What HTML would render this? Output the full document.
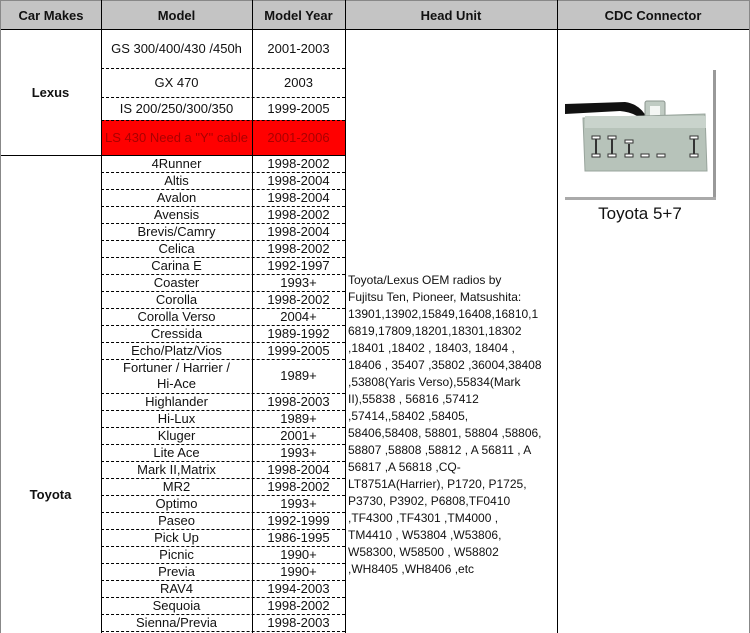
<!DOCTYPE html>
<html style="width:750px;height:633px;overflow:hidden"><head><meta charset="utf-8"><style>
*{margin:0;padding:0;box-sizing:border-box}
body{width:750px;height:633px;overflow:hidden;background:#fff;font-family:"Liberation Sans",Arial,sans-serif;position:relative;color:#111}
.c{position:absolute;display:flex;align-items:center;justify-content:center;text-align:center;font-size:13px;line-height:16px}
.h{position:absolute;top:0;height:30px;background:#c4c4c4;font-weight:bold;font-size:13px;display:flex;align-items:center;justify-content:center;border-top:1px solid #888;border-bottom:1px solid #000}
.vl{position:absolute;top:0;width:1px;background:#000}
.dl{position:absolute;height:0;border-top:1px dashed #000}
.hu{position:absolute;left:348px;top:272px;width:210px;font-size:12px;line-height:17px}
</style></head><body>
<div class="h" style="left:0;width:101px;border-left:1px solid #888">Car Makes</div>
<div class="h" style="left:101px;width:151px">Model</div>
<div class="h" style="left:252px;width:93px">Model Year</div>
<div class="h" style="left:345px;width:212px">Head Unit</div>
<div class="h" style="left:557px;width:193px;border-right:1px solid #888">CDC Connector</div>

<div style="position:absolute;left:101px;top:120px;width:244px;height:35px;background:#f00"></div>
<div class="dl" style="left:101px;top:155px;width:244px;border-top:1px solid #000"></div>
<div class="dl" style="left:0;top:155px;width:101px;border-top:1px solid #000"></div>

<div class="c" style="left:0;top:30px;width:101px;height:125px;font-weight:bold;font-size:13px">Lexus</div>
<div class="c" style="left:0;top:487px;width:101px;height:16px;font-weight:bold;font-size:13px">Toyota</div>

<div id="rows"></div>

<div class="vl" style="left:0;height:633px;background:#888"></div>
<div class="vl" style="left:749px;height:633px;background:#888"></div>
<div class="vl" style="left:101px;height:633px"></div>
<div class="vl" style="left:252px;height:633px"></div>
<div class="vl" style="left:345px;height:633px"></div>
<div class="vl" style="left:557px;height:633px"></div>

<div class="hu">Toyota/Lexus OEM radios by<br>Fujitsu Ten, Pioneer, Matsushita:<br>13901,13902,15849,16408,16810,1<br>6819,17809,18201,18301,18302<br>,18401 ,18402 , 18403, 18404 ,<br>18406 , 35407 ,35802 ,36004,38408<br>,53808(Yaris Verso),55834(Mark<br>II),55838 , 56816 ,57412<br>,57414,,58402 ,58405,<br>58406,58408, 58801, 58804 ,58806,<br>58807 ,58808 ,58812 , A 56811 , A<br>56817 ,A 56818 ,CQ-<br>LT8751A(Harrier), P1720, P1725,<br>P3730, P3902, P6808,TF0410<br>,TF4300 ,TF4301 ,TM4000 ,<br>TM4410 , W53804 ,W53806,<br>W58300, W58500 , W58802<br>,WH8405 ,WH8406 ,etc</div>

<svg style="position:absolute;left:558px;top:60px" width="190" height="170" viewBox="558 60 190 170">
<rect x="713" y="70" width="3" height="129" fill="#999"/>
<rect x="565" y="197" width="151" height="3" fill="#aaa"/>
<path d="M565 104 L625 102 Q640 104 647 118 L640 118 Q632 112 620 111 L565 114Z" fill="#111"/>
<rect x="645" y="101" width="20" height="24" rx="2" fill="#c0cbc3" stroke="#8a948e"/>
<rect x="650" y="106" width="10" height="10" fill="#f4f6f4"/>
<path d="M583 118 L705 114 L707 171 L585 171Z" fill="#b7c3ba" stroke="#98a49c"/>
<rect x="585" y="116" width="121" height="12" fill="#c9d3cc"/>
<g stroke="#333" stroke-width="2"><path d="M596 139 L596 154M612 139 L612 154M629 144 L629 154M694 139 L694 154"/></g>
<g fill="#fff" stroke="#333" stroke-width="1">
<rect x="592" y="136" width="8" height="3"/><rect x="608" y="136" width="8" height="3"/><rect x="625" y="140" width="8" height="3"/><rect x="690" y="136" width="8" height="3"/>
<rect x="592" y="154" width="8" height="3"/><rect x="608" y="154" width="8" height="3"/><rect x="625" y="154" width="8" height="3"/><rect x="641" y="154" width="8" height="3"/><rect x="657" y="154" width="8" height="3"/><rect x="690" y="154" width="8" height="3"/>
</g>
<text x="640" y="219" font-family="Liberation Sans,Arial,sans-serif" font-size="17" text-anchor="middle" fill="#111">Toyota 5+7</text>
</svg>

<script>
var r=[["GS 300/400/430 /450h","2001-2003",30,38],["GX 470","2003",68,29],["IS 200/250/300/350","1999-2005",97,23],["LS 430 Need a \"Y\" cable","2001-2006",120,35,1]];
var t=[["4Runner","1998-2002"],["Altis","1998-2004"],["Avalon","1998-2004"],["Avensis","1998-2002"],["Brevis/Camry","1998-2004"],["Celica","1998-2002"],["Carina E","1992-1997"],["Coaster","1993+"],["Corolla","1998-2002"],["Corolla Verso","2004+"],["Cressida","1989-1992"],["Echo/Platz/Vios","1999-2005"],["Fortuner / Harrier /<br>Hi-Ace","1989+",34],["Highlander","1998-2003"],["Hi-Lux","1989+"],["Kluger","2001+"],["Lite Ace","1993+"],["Mark II,Matrix","1998-2004"],["MR2","1998-2002"],["Optimo","1993+"],["Paseo","1992-1999"],["Pick Up","1986-1995"],["Picnic","1990+"],["Previa","1990+"],["RAV4","1994-2003"],["Sequoia","1998-2002"],["Sienna/Previa","1998-2003"]];
var y=155;t.forEach(function(a){var h=a[2]||17;r.push([a[0],a[1],y,h]);y+=h;});
var o="";r.forEach(function(a,i){var col=a[4]?"color:#a00;":"";
o+='<div class="c" style="left:101px;top:'+a[2]+'px;width:151px;height:'+a[3]+'px;'+col+'">'+a[0]+'</div>';
o+='<div class="c" style="left:252px;top:'+a[2]+'px;width:93px;height:'+a[3]+'px;'+col+'">'+a[1]+'</div>';
var b=a[2]+a[3];if(b!=155&&b<633)o+='<div class="dl" style="left:101px;top:'+b+'px;width:244px"></div>';});
document.getElementById("rows").innerHTML=o;
</script>
</body></html>
